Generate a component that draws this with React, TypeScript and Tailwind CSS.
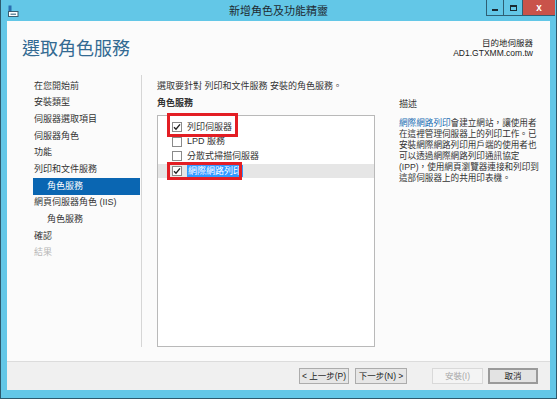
import React from "react";

const font = "font-['Liberation_Sans','Noto_Sans_CJK_TC',sans-serif]";

type NavItem = { label: string; sub?: boolean; active?: boolean; disabled?: boolean };

const navItems: NavItem[] = [
  { label: "在您開始前" },
  { label: "安裝類型" },
  { label: "伺服器選取項目" },
  { label: "伺服器角色" },
  { label: "功能" },
  { label: "列印和文件服務" },
  { label: "角色服務", sub: true, active: true },
  { label: "網頁伺服器角色 (IIS)" },
  { label: "角色服務", sub: true },
  { label: "確認" },
  { label: "結果", disabled: true },
];

const services = [
  { label: "列印伺服器", checked: true },
  { label: "LPD 服務", checked: false },
  { label: "分散式掃描伺服器", checked: false },
  { label: "網際網路列印", checked: true, selected: true },
];

function CheckBox({ checked }: { checked: boolean }) {
  return (
    <span className="flex h-[10px] w-[10px] items-center justify-center border border-[#8a8a8a] bg-white">
      {checked && (
        <svg width="8" height="8" viewBox="0 0 8 8">
          <path d="M1 4.2 L3 6.2 L7 1.4" fill="none" stroke="#222" strokeWidth="1.4" />
        </svg>
      )}
    </span>
  );
}

function WinIcon() {
  return (
    <svg width="11" height="12" viewBox="0 0 11 12">
      <rect x="0.5" y="0.5" width="3" height="6" fill="#2a6fb0" />
      <rect x="0.5" y="6.5" width="9.5" height="5" fill="#ffffff" stroke="#3a5d70" strokeWidth="1" />
      <rect x="2.5" y="8.5" width="5.5" height="1.5" fill="#6b8ea3" />
    </svg>
  );
}

export default function App() {
  return (
    <div className={`${font} flex h-[399px] w-[557px] flex-col border-x border-b border-[#2d5a6e] bg-[#63c7e7]`}>
      {/* title bar */}
      <div className="relative flex h-[21px] items-start">
        <div className="ml-[7px] mt-[5px]">
          <WinIcon />
        </div>
        <div className="absolute left-0 right-0 top-[4px] text-center text-[11px] leading-[14px] text-[#1e2a30]">
          新增角色及功能精靈
        </div>
        <div className="relative ml-auto mr-[1px] flex h-[16px]">
          <div className="flex w-[17px] items-end justify-center border-l border-b border-[#2e5f74] pb-[4px]">
            <span className="h-[2px] w-[6px] bg-[#1a2a33]" />
          </div>
          <div className="flex w-[19px] items-center justify-center border-l border-b border-[#2e5f74]">
            <span className="h-[6px] w-[7px] border border-t-2 border-[#1a2a33]" />
          </div>
          <div className="flex w-[33px] items-center justify-center border-l border-b border-[#2e5f74] bg-[#c9534a] text-[10px] font-bold leading-none text-white">
            x
          </div>
        </div>
      </div>

      {/* body */}
      <div className="mx-[6px] flex h-[369px] flex-col bg-[#fbfbfb]">
        {/* header */}
        <div className="flex h-[50px] justify-between">
          <div className="pl-[15px] pt-[16px] text-[18px] leading-[24px] text-[#336a92]">選取角色服務</div>
          <div className="pr-[17px] pt-[17px] text-right text-[8.5px] leading-[10px] text-[#222]">
            <div>目的地伺服器</div>
            <div>AD1.GTXMM.com.tw</div>
          </div>
        </div>

        {/* main */}
        <div className="flex h-[290px]">
          <div className="mt-[4px] h-[272px] w-[135px] border-r border-[#d6d6d6] pl-[26px] pr-[1px] pt-[3px]">
            {navItems.map((item, i) => (
              <div
                key={i}
                className={`flex h-[16.7px] items-center whitespace-nowrap text-[9px] ${
                  item.sub ? "pl-[14px]" : "pl-[1px]"
                } ${
                  item.active
                    ? "bg-[#0a66b2] text-white"
                    : item.disabled
                    ? "text-[#b8b8b8]"
                    : "text-[#333]"
                }`}
              >
                {item.label}
              </div>
            ))}
          </div>

          <div className="pl-[15px] pt-[8px]">
            <div className="whitespace-nowrap text-[9px] leading-[14px] text-[#333]">
              選取要針對 列印和文件服務 安裝的角色服務。
            </div>
            <div className="mt-[3px] text-[9px] font-semibold leading-[14px] text-[#333]">角色服務</div>
            <div className="relative mt-[5px] h-[232px] w-[218px] border border-[#b9b9b9] bg-white pt-[4px]">
              {services.map((s, i) => (
                <div
                  key={i}
                  className={`flex h-[14.5px] items-center gap-[5px] pl-[14px] text-[9px] text-[#333] ${
                    s.selected ? "bg-[#e6e6e6]" : ""
                  }`}
                >
                  <CheckBox checked={s.checked} />
                  <span className={s.selected ? "bg-[#3399ff] px-[1px] leading-[12px] text-white" : ""}>{s.label}</span>
                </div>
              ))}
              <div className="absolute left-[9px] top-[-3px] h-[24px] w-[71px] border-[3px] border-[#e31e24]" />
              <div className="absolute left-[9px] top-[46px] h-[18px] w-[75px] border-[3px] border-[#e31e24]" />
            </div>
          </div>

          <div className="ml-[24px] w-[142px] pt-[26px] text-[#333]">
            <div className="text-[9px] leading-[14px]">描述</div>
            <div className="mt-[7px] whitespace-nowrap text-[8.6px] leading-[11px]">
              <div>
                <span className="text-[#1a6db3]">網際網路列印</span>會建立網站，讓使用者
              </div>
              <div>在這裡管理伺服器上的列印工作。已</div>
              <div>安裝網際網路列印用戶端的使用者也</div>
              <div>可以透過網際網路列印通訊協定</div>
              <div>(IPP)，使用網頁瀏覽器連接和列印到</div>
              <div>這部伺服器上的共用印表機。</div>
            </div>
          </div>
        </div>

        {/* footer */}
        <div className="flex h-[29px] items-center justify-end border-t border-[#dcdcdc] bg-[#f0f0f0] pr-[12px]">
          <button className="flex h-[16px] w-[50px] items-center justify-center border border-[#acacac] bg-[#e6e6e6] text-[8.5px] text-[#222]">
            &lt; 上一步(P)
          </button>
          <button className="ml-[6px] flex h-[16px] w-[52px] items-center justify-center border border-[#acacac] bg-[#e6e6e6] text-[8.5px] text-[#222]">
            下一步(N) &gt;
          </button>
          <button className="ml-[25px] flex h-[16px] w-[51px] items-center justify-center border border-[#d9d9d9] bg-[#f4f4f4] text-[8.5px] text-[#a8a8a8]">
            安裝(I)
          </button>
          <button className="ml-[5px] flex h-[16px] w-[50px] items-center justify-center border-2 border-[#9a9a9a] bg-[#e3e3e3] text-[8.5px] text-[#222]">
            取消
          </button>
        </div>
      </div>
    </div>
  );
}
